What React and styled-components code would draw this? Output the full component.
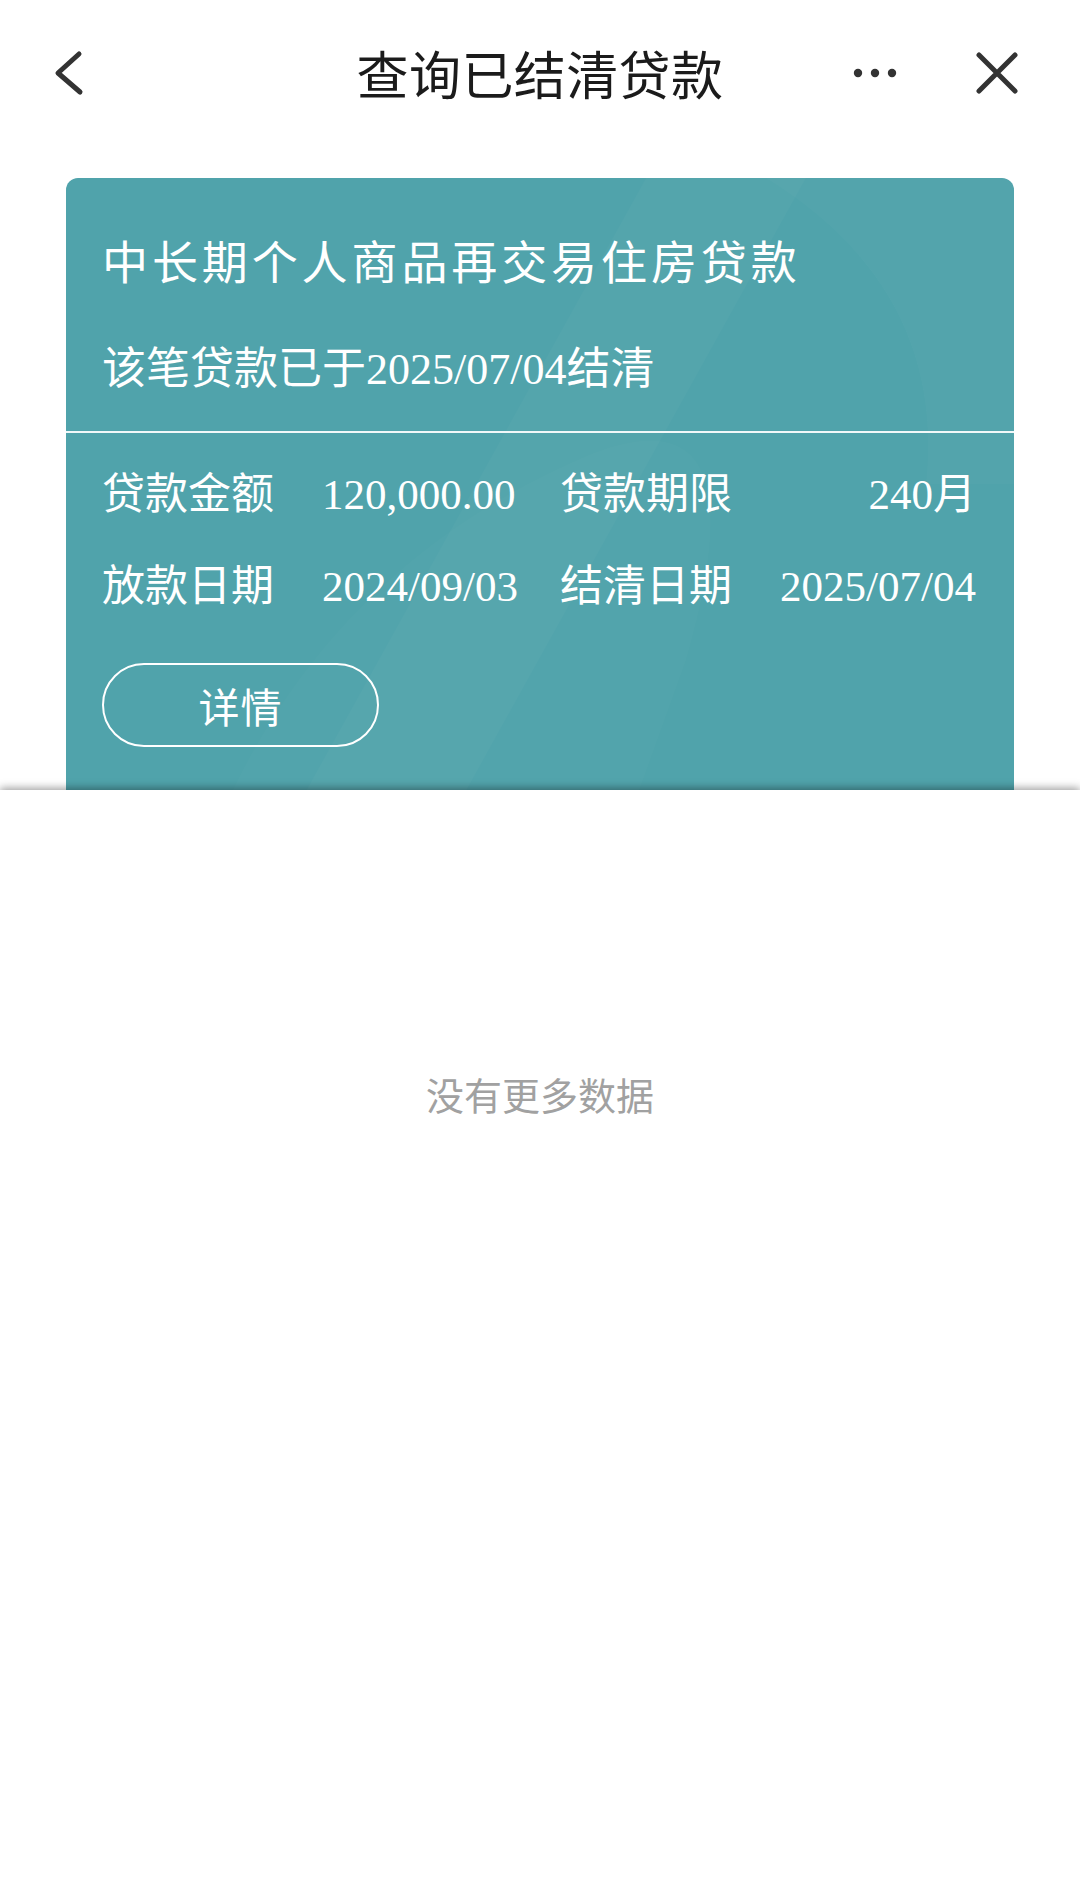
import React from "react";
import styled, { createGlobalStyle } from "styled-components";

const GlobalStyle = createGlobalStyle`
  html, body {
    margin: 0;
    padding: 0;
    background: #ffffff;
  }
  body {
    font-family: "Liberation Serif", "Noto Sans CJK SC", serif;
    -webkit-font-smoothing: antialiased;
  }
  #root {
    min-height: 1885px;
    display: flex;
    flex-direction: column;
  }
`;

const Page = styled.div`
  display: flex;
  flex-direction: column;
  flex: 1;
  background: #ffffff;
`;

const NavBar = styled.header`
  height: 146px;
  display: grid;
  grid-template-columns: 1fr auto 1fr;
  align-items: center;
  background: #ffffff;
`;

const NavLeft = styled.div`
  display: flex;
  align-items: center;
  padding-left: 52px;
`;

const NavRight = styled.div`
  display: flex;
  align-items: center;
  justify-content: flex-end;
  gap: 72px;
  padding-right: 58px;
`;

const NavTitle = styled.h1`
  margin: 0;
  font-family: "Noto Sans CJK SC", sans-serif;
  font-weight: 400;
  font-size: 52px;
  line-height: 1;
  color: #1b1b1b;
  letter-spacing: 0.4px;
`;

const IconSvg = styled.svg`
  display: block;
`;

const ListViewport = styled.section`
  height: 644px;
  overflow: hidden;
  padding: 32px 66px 0;
  box-sizing: border-box;
`;

const Card = styled.article`
  position: relative;
  overflow: hidden;
  border-radius: 12px;
  background: #50a3ab;
  color: #ffffff;
  padding-bottom: 80px;
`;

const Watermark = styled.svg`
  position: absolute;
  inset: 0;
  width: 100%;
  height: 100%;
  pointer-events: none;
`;

const CardHeader = styled.div`
  position: relative;
  padding: 48px 36px 31px;
  display: flex;
  flex-direction: column;
  gap: 48px;
`;

const CardTitle = styled.h2`
  margin: 0;
  font-family: "Noto Sans CJK SC", sans-serif;
  font-weight: 400;
  font-size: 46px;
  letter-spacing: 3.9px;
  line-height: 66px;
  height: 66px;
  white-space: nowrap;
`;

const CardSubtitle = styled.p`
  margin: 0;
  font-size: 44px;
  line-height: 60px;
  height: 60px;
  white-space: nowrap;
`;

const Divider = styled.hr`
  position: relative;
  margin: 0;
  border: none;
  height: 2px;
  background: rgba(255, 255, 255, 0.92);
`;

const InfoGrid = styled.dl`
  position: relative;
  margin: 0;
  padding: 32px 38px 0 36px;
  display: grid;
  grid-template-columns: 220px 238px 1fr auto;
  row-gap: 32px;
  font-size: 43px;
  line-height: 60px;
`;

const Label = styled.dt`
  margin: 0;
  white-space: nowrap;
`;

const Value = styled.dd`
  margin: 0;
  white-space: nowrap;
  text-align: ${(p) => (p.$end ? "right" : "left")};
`;

const ButtonRow = styled.div`
  position: relative;
  padding: 46px 36px 0;
`;

const DetailButton = styled.button`
  width: 277px;
  height: 84px;
  box-sizing: border-box;
  border: 2.5px solid #ffffff;
  border-radius: 42px;
  background: transparent;
  color: #ffffff;
  font-family: "Noto Sans CJK SC", sans-serif;
  font-size: 41px;
  line-height: 1;
  padding: 0;
  letter-spacing: 1px;
`;

const BottomSheet = styled.section`
  position: relative;
  z-index: 1;
  flex: 1;
  background: #ffffff;
  box-shadow: 0 -2px 8px rgba(0, 0, 0, 0.38);
  display: flex;
  justify-content: center;
  padding-top: 284px;
`;

const EmptyText = styled.p`
  margin: 0;
  font-family: "Noto Sans CJK SC", sans-serif;
  font-size: 38px;
  line-height: 40px;
  color: #a1a1a1;
`;

const rows = [
  ["贷款金额", "120,000.00", "贷款期限", "240月"],
  ["放款日期", "2024/09/03", "结清日期", "2025/07/04"],
];

export default function App() {
  return (
    <Page>
      <GlobalStyle />
      <NavBar>
        <NavLeft>
          <IconSvg width="32" height="48" viewBox="0 0 32 48" fill="none">
            <polyline
              points="27,5 6,24 28,43"
              stroke="#333333"
              strokeWidth="5"
              strokeLinecap="round"
              strokeLinejoin="round"
            />
          </IconSvg>
        </NavLeft>
        <NavTitle>查询已结清贷款</NavTitle>
        <NavRight>
          <IconSvg width="50" height="16" viewBox="0 0 50 16">
            <circle cx="8" cy="8" r="4.2" fill="#333333" />
            <circle cx="25" cy="8" r="4.2" fill="#333333" />
            <circle cx="42" cy="8" r="4.2" fill="#333333" />
          </IconSvg>
          <IconSvg width="50" height="50" viewBox="0 0 50 50" fill="none">
            <path
              d="M7 7 L43 43 M43 7 L7 43"
              stroke="#333333"
              strokeWidth="5"
              strokeLinecap="round"
            />
          </IconSvg>
        </NavRight>
      </NavBar>

      <ListViewport>
        <Card>
          <Watermark viewBox="0 0 948 700" preserveAspectRatio="none">
            <path d="M580 0 L740 0 L380 700 L220 700 Z" fill="rgba(255,255,255,0.022)" />
            <path d="M700 0 Q880 120 860 330 L948 330 L948 0 Z" fill="rgba(255,255,255,0.018)" />
            <path d="M150 700 Q260 420 520 300 Q700 220 620 520 L560 700 Z" fill="rgba(255,255,255,0.015)" />
          </Watermark>
          <CardHeader>
            <CardTitle>中长期个人商品再交易住房贷款</CardTitle>
            <CardSubtitle>该笔贷款已于2025/07/04结清</CardSubtitle>
          </CardHeader>
          <Divider />
          <InfoGrid>
            {rows.map(([l1, v1, l2, v2]) => (
              <React.Fragment key={l1}>
                <Label>{l1}</Label>
                <Value>{v1}</Value>
                <Label>{l2}</Label>
                <Value $end>{v2}</Value>
              </React.Fragment>
            ))}
          </InfoGrid>
          <ButtonRow>
            <DetailButton type="button">详情</DetailButton>
          </ButtonRow>
        </Card>
      </ListViewport>

      <BottomSheet>
        <EmptyText>没有更多数据</EmptyText>
      </BottomSheet>
    </Page>
  );
}
